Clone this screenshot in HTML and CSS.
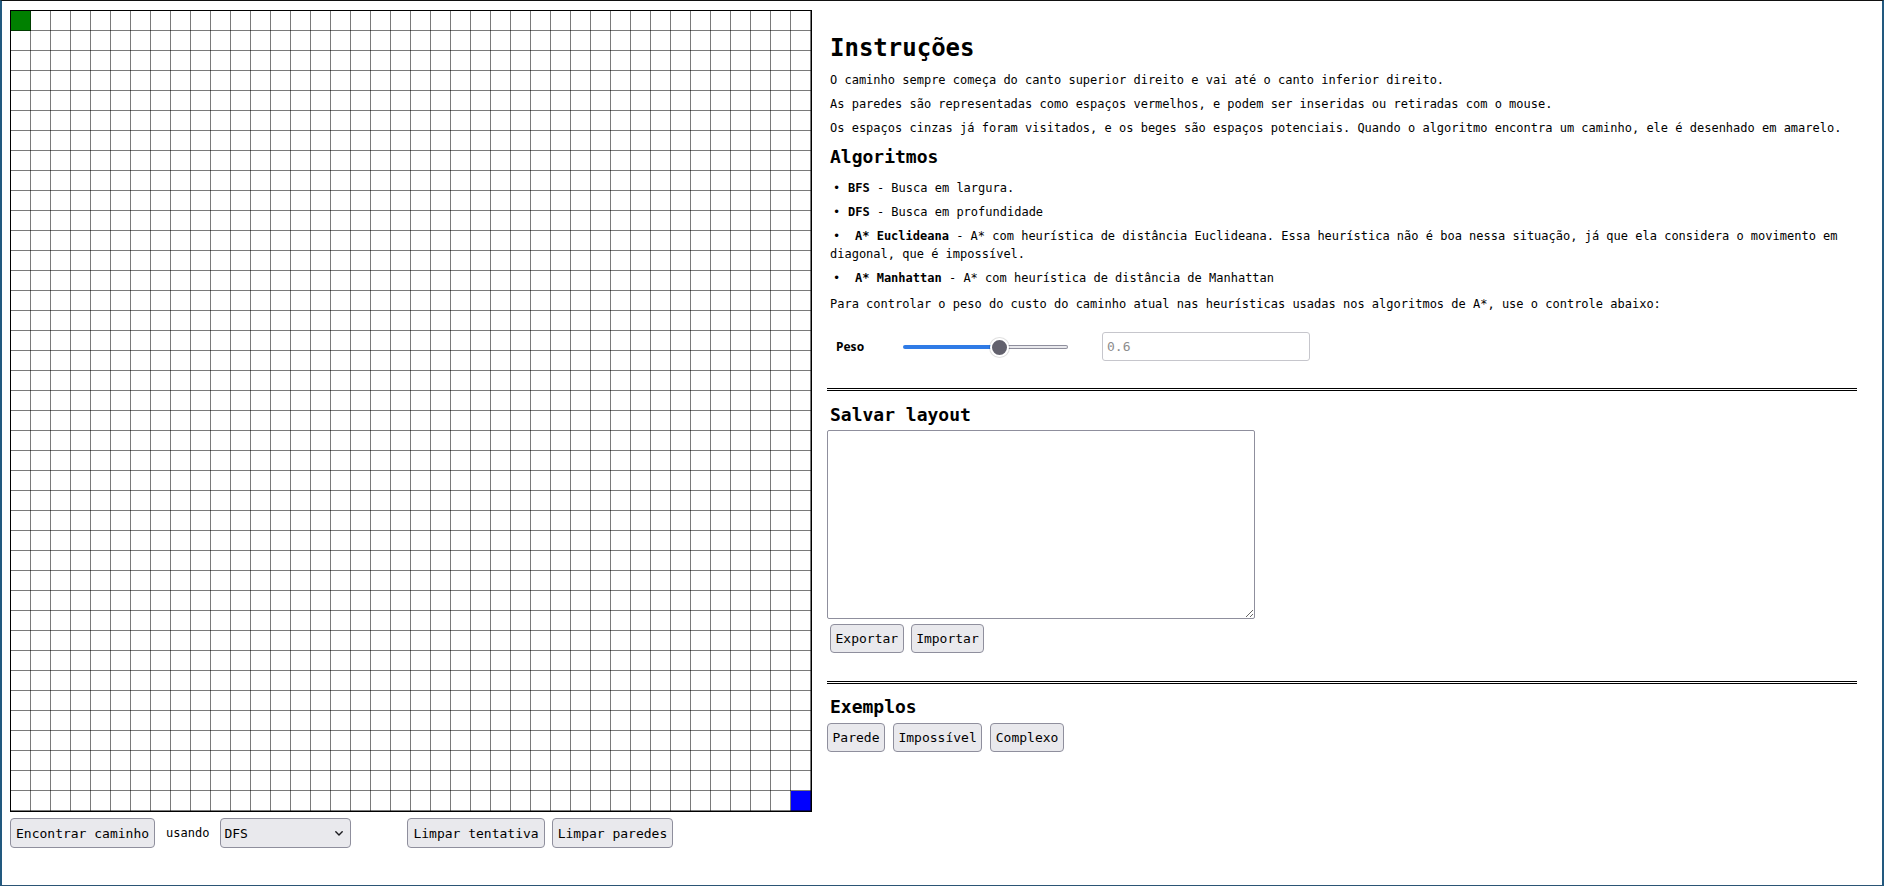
FILE: index.html
```html
<!DOCTYPE html>
<html lang="pt-BR">
<head>
<meta charset="utf-8">
<title>Busca de caminhos</title>
<link rel="stylesheet" href="styles.css">
</head>
<body>
<div class="window">
  <div class="main">
    <div class="board">
      <div class="grid">
        <div class="cell cell-start"></div>
        <div class="cell cell-end"></div>
      </div>
      <div class="controls">
        <button class="btn btn-lg">Encontrar caminho</button>
        <span class="using">usando</span>
        <div class="select-wrap">
          <select class="select">
            <option>BFS</option>
            <option selected>DFS</option>
            <option>A* Euclideana</option>
            <option>A* Manhattan</option>
          </select>
          <svg class="chevron" width="8" height="5" viewBox="0 0 8 5"><path d="M0.8 0.8 L4 4 L7.2 0.8" fill="none" stroke="#1b1b1f" stroke-width="1.4" stroke-linecap="round" stroke-linejoin="round"/></svg>
        </div>
        <button class="btn btn-lg btn-far">Limpar tentativa</button>
        <button class="btn btn-lg btn-near">Limpar paredes</button>
      </div>
    </div>
    <div class="panel">
      <h1 class="title">Instruções</h1>
      <p class="text">O caminho sempre começa do canto superior direito e vai até o canto inferior direito.</p>
      <p class="text">As paredes são representadas como espaços vermelhos, e podem ser inseridas ou retiradas com o mouse.</p>
      <p class="text">Os espaços cinzas já foram visitados, e os beges são espaços potenciais. Quando o algoritmo encontra um caminho, ele é desenhado em amarelo.</p>
      <h2 class="subtitle subtitle-algos">Algoritmos</h2>
      <ul class="algos">
        <li class="algo"><span class="bullet">•</span><b>BFS</b> - Busca em largura.</li>
        <li class="algo"><span class="bullet">•</span><b>DFS</b> - Busca em profundidade</li>
        <li class="algo"><span class="bullet">•</span><b class="algo-name">A* Euclideana</b> - A* com heurística de distância Euclideana. Essa heurística não é boa nessa situação, já que ela considera o movimento em diagonal, que é impossível.</li>
        <li class="algo"><span class="bullet">•</span><b class="algo-name">A* Manhattan</b> - A* com heurística de distância de Manhattan</li>
      </ul>
      <p class="text">Para controlar o peso do custo do caminho atual nas heurísticas usadas nos algoritmos de A*, use o controle abaixo:</p>
      <div class="weight">
        <span class="weight-label">Peso</span>
        <input class="slider" type="range" min="0" max="1" step="0.1" value="0.6">
        <input class="weight-value" type="text" placeholder="0.6" disabled>
      </div>
      <hr class="rule rule-first">
      <h2 class="subtitle subtitle-save">Salvar layout</h2>
      <textarea class="layout-box"></textarea>
      <div class="save-actions">
        <button class="btn">Exportar</button>
        <button class="btn">Importar</button>
      </div>
      <hr class="rule rule-second">
      <h2 class="subtitle subtitle-examples">Exemplos</h2>
      <div class="examples">
        <button class="btn">Parede</button>
        <button class="btn">Impossível</button>
        <button class="btn">Complexo</button>
      </div>
    </div>
  </div>
</div>
</body>
</html>
```
FILE: styles.css
```css
html, body {
  margin: 0;
  padding: 0;
  background: #fff;
}

body {
  font-family: "DejaVu Sans Mono", monospace;
  font-size: 12px;
  color: #000;
}

.window {
  box-sizing: border-box;
  width: 1884px;
  height: 886px;
  border-top: 1px solid #111;
  border-left: 2px solid #22597f;
  border-right: 2px solid #22597f;
  border-bottom: 1px solid #2b5575;
  padding: 9px 8px 0 8px;
  overflow: hidden;
}

.main {
  display: flex;
  align-items: flex-start;
  gap: 15px;
}

/* ---------- grid ---------- */
.grid {
  position: relative;
  width: 800px;
  height: 800px;
  border: 1px solid #000;
}

.grid::after {
  content: "";
  position: absolute;
  inset: 0;
  background-image:
    linear-gradient(to right, rgba(0, 0, 0, 0.52) 1px, transparent 1px),
    linear-gradient(to bottom, rgba(0, 0, 0, 0.52) 1px, transparent 1px);
  background-size: 20px 20px;
  background-position: 19px 19px;
}

.cell {
  position: absolute;
  width: 20px;
  height: 20px;
}

.cell-start {
  left: 0;
  top: 0;
  background: #008000;
}

.cell-end {
  left: 780px;
  top: 780px;
  background: #0000ff;
}

/* ---------- controls ---------- */
.controls {
  display: flex;
  align-items: center;
  margin-top: 6px;
}

.btn {
  font-family: "DejaVu Sans Mono", monospace;
  font-size: 13px;
  color: #000;
  background: #e9e9ed;
  border: 1px solid #8f8f9d;
  border-radius: 4px;
  height: 29px;
  padding: 0 4.5px;
  margin: 0;
  box-sizing: border-box;
}

.btn-lg {
  height: 30px;
  padding: 0 5px;
}

.using {
  margin: 0 11px;
}

.select-wrap {
  position: relative;
  display: flex;
}

.select {
  -webkit-appearance: none;
  appearance: none;
  width: 131px;
  height: 30px;
  box-sizing: border-box;
  background: #e9e9ed;
  border: 1px solid #8f8f9d;
  border-radius: 4px;
  font-family: "DejaVu Sans Mono", monospace;
  font-size: 13px;
  color: #000;
  padding: 0 0 0 3px;
  margin: 0;
}

.chevron {
  position: absolute;
  right: 8px;
  top: 13px;
  pointer-events: none;
}

.btn-far {
  margin-left: 56px;
}

.btn-near {
  margin-left: 7px;
}

/* ---------- panel ---------- */
.panel {
  width: 1030px;
}

.title {
  font-size: 24px;
  line-height: 28px;
  font-weight: bold;
  margin: 24px 0 9px;
  padding-left: 3px;
}

.text {
  margin: 6px 0;
  line-height: 18px;
  padding-left: 3px;
}

.subtitle {
  font-size: 18px;
  line-height: 21px;
  font-weight: bold;
  padding-left: 3px;
}

.subtitle-algos {
  margin: 9px 0 12px;
}

.subtitle-save {
  margin: 13px 0 5px;
}

.subtitle-examples {
  margin: 12px 0 6px;
}

.algos {
  list-style: none;
  margin: 0 0 8px;
  padding: 0;
}

.algo {
  margin: 6px 0;
  line-height: 18px;
  padding-left: 3px;
}

.bullet {
  display: inline-block;
  width: 15px;
  padding-left: 3px;
}

.algo-name {
  padding-left: 7px;
}

/* weight row */
.weight {
  display: flex;
  align-items: center;
  height: 29px;
  margin-top: 19px;
  padding-left: 9px;
}

.weight-label {
  font-family: "Noto Sans", sans-serif;
  font-weight: bold;
  font-size: 12px;
  width: 67px;
}

.slider {
  -webkit-appearance: none;
  appearance: none;
  width: 165px;
  height: 20px;
  margin: 0;
  background: transparent;
}

.slider::-webkit-slider-runnable-track {
  height: 4px;
  border: 1px solid transparent;
  border-radius: 4px;
  background:
    linear-gradient(to right, #2f7be6 59%, transparent 59%) border-box,
    linear-gradient(#e9e9ed, #e9e9ed) padding-box,
    linear-gradient(#8f8f9d, #8f8f9d) border-box;
}

.slider::-webkit-slider-thumb {
  -webkit-appearance: none;
  appearance: none;
  box-sizing: border-box;
  width: 19px;
  height: 19px;
  border-radius: 50%;
  background: #62616d;
  border: 2px solid #fff;
  box-shadow: 0 0 0 1px rgba(0, 0, 0, 0.12);
  margin-top: -8px;
}

.weight-value {
  box-sizing: border-box;
  width: 208px;
  height: 29px;
  margin: 0 0 0 34px;
  padding: 0 0 0 4px;
  border: 1px solid #c6c6cc;
  border-radius: 3px;
  background: #fff;
  font-family: "DejaVu Sans Mono", monospace;
  font-size: 13px;
}

.weight-value::placeholder {
  color: #8d8d8d;
}

.rule {
  border: none;
  border-top: 3px double #000;
  height: 0;
  margin: 0;
}

.rule-first {
  margin-top: 27px;
}

.rule-second {
  margin-top: 28px;
}

.layout-box {
  display: block;
  box-sizing: border-box;
  width: 428px;
  height: 189px;
  margin: 0;
  border: 1px solid #8f8f9d;
  border-radius: 2px;
  font-family: "DejaVu Sans Mono", monospace;
  font-size: 13px;
}

.save-actions {
  display: flex;
  gap: 7px;
  margin-top: 5px;
  padding-left: 3px;
}

.examples {
  display: flex;
  gap: 8px;
}
```
